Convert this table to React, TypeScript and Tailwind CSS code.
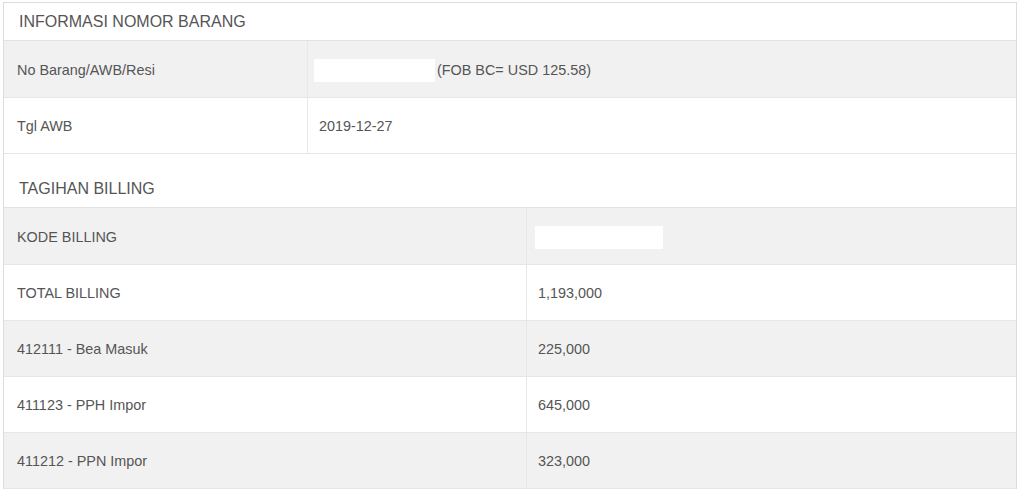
const infoRows = [
  { label: "No Barang/AWB/Resi", value: "fob" },
  { label: "Tgl AWB", value: "2019-12-27" },
];

const billingRows = [
  { label: "KODE BILLING", value: "" },
  { label: "TOTAL BILLING", value: "1,193,000" },
  { label: "412111 - Bea Masuk", value: "225,000" },
  { label: "411123 - PPH Impor", value: "645,000" },
  { label: "411212 - PPN Impor", value: "323,000" },
];

export default function App() {
  return (
    <div
      className="min-h-[492px] bg-white pt-[2px] pl-[3px] pr-[4px] text-[14.4px] text-[#555]"
      style={{ fontFamily: '"Liberation Sans", Arial, sans-serif' }}
    >
      <div className="border-x border-t border-[#dcdcdc]">
        <div className="flex h-[38px] items-center border-b border-[#e2e2e2] px-[15px] text-[16px]">
          INFORMASI NOMOR BARANG
        </div>
        {infoRows.map((row, i) => (
          <div
            key={row.label}
            className={
              "flex items-center border-b border-[#e6e6e6] " +
              (i === 0 ? "h-[57px] bg-[#f1f1f1]" : "h-[56px] bg-white")
            }
          >
            <div className="flex h-full w-[304px] items-center border-r border-[#e8e8e8] pt-[3px] pl-[13px]">
              {row.label}
            </div>
            <div className="flex h-full flex-1 items-center pt-[3px] pl-[6px]">
              {row.value === "fob" ? (
                <>
                  <span className="mr-[2px] inline-block h-[23px] w-[121px] bg-white" />
                  <span>(FOB BC= USD 125.58)</span>
                </>
              ) : (
                <span className="pl-[5px]">{row.value}</span>
              )}
            </div>
          </div>
        ))}

        <div className="mt-[16px] flex h-[38px] items-center border-b border-[#e2e2e2] px-[15px] text-[16px]">
          TAGIHAN BILLING
        </div>
        {billingRows.map((row, i) => (
          <div
            key={row.label}
            className={
              "flex items-center border-b border-[#e6e6e6] " +
              (i === 0 ? "h-[57px] " : "h-[56px] ") +
              (i % 2 === 0 ? "bg-[#f1f1f1]" : "bg-white")
            }
          >
            <div className="flex h-full w-[523px] items-center border-r border-[#e4e8ec] pt-[3px] pl-[13px]">
              {row.label}
            </div>
            <div className="flex h-full flex-1 items-center pt-[3px] pl-[11px]">
              {row.value === "" ? (
                <span className="ml-[-3px] inline-block h-[23px] w-[128px] bg-white" />
              ) : (
                row.value
              )}
            </div>
          </div>
        ))}
      </div>
    </div>
  );
}
